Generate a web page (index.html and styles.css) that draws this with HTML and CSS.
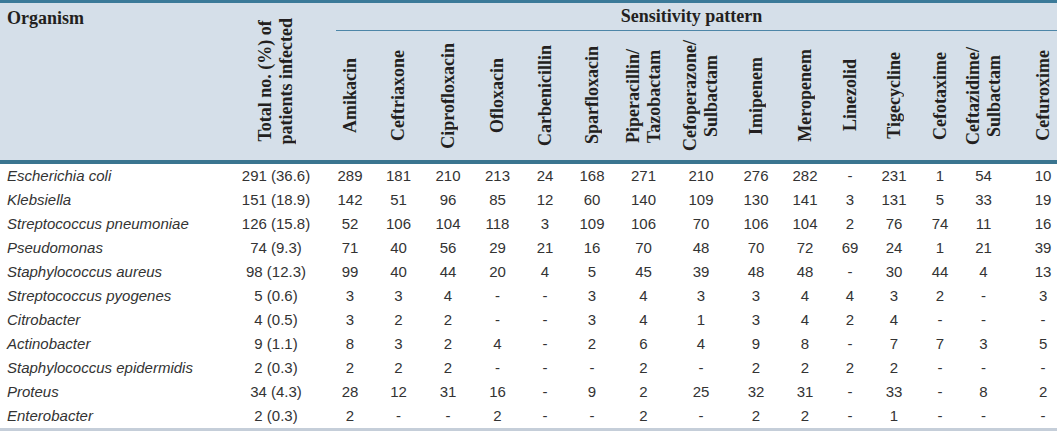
FILE: index.html
```html
<!DOCTYPE html>
<html>
<head>
<meta charset="utf-8">
<link rel="stylesheet" href="styles.css">
</head>
<body>
<table class="sens">
  <colgroup>
    <col class="c-org"><col class="c-tot">
    <col style="width:48px"><col style="width:49px"><col style="width:50px"><col style="width:49px">
    <col style="width:46px"><col style="width:48px"><col style="width:55px"><col style="width:60px">
    <col style="width:50px"><col style="width:48px"><col style="width:42px"><col style="width:46px">
    <col style="width:46px"><col style="width:41px"><col style="width:53px">
  </colgroup>
  <thead>
    <tr class="hr1">
      <th rowspan="2" class="h-org">Organism</th>
      <th rowspan="2" class="h-rot h-tot"><div class="rot-wrap tall"><span class="rot">Total no. (%) of<br>patients infected</span></div></th>
      <th colspan="15" class="h-group"><div class="group-label">Sensitivity pattern</div></th>
    </tr>
    <tr class="hr2">
      <th class="h-rot"><div class="rot-wrap"><span class="rot">Amikacin</span></div></th>
      <th class="h-rot"><div class="rot-wrap"><span class="rot">Ceftriaxone</span></div></th>
      <th class="h-rot"><div class="rot-wrap"><span class="rot">Ciprofloxacin</span></div></th>
      <th class="h-rot"><div class="rot-wrap"><span class="rot">Ofloxacin</span></div></th>
      <th class="h-rot"><div class="rot-wrap"><span class="rot">Carbenicillin</span></div></th>
      <th class="h-rot"><div class="rot-wrap"><span class="rot">Sparfloxacin</span></div></th>
      <th class="h-rot"><div class="rot-wrap"><span class="rot">Piperacillin/<br>Tazobactam</span></div></th>
      <th class="h-rot"><div class="rot-wrap"><span class="rot">Cefoperazone/<br>Sulbactam</span></div></th>
      <th class="h-rot"><div class="rot-wrap"><span class="rot">Imipenem</span></div></th>
      <th class="h-rot"><div class="rot-wrap"><span class="rot">Meropenem</span></div></th>
      <th class="h-rot"><div class="rot-wrap"><span class="rot">Linezolid</span></div></th>
      <th class="h-rot"><div class="rot-wrap"><span class="rot">Tigecycline</span></div></th>
      <th class="h-rot"><div class="rot-wrap"><span class="rot">Cefotaxime</span></div></th>
      <th class="h-rot"><div class="rot-wrap"><span class="rot">Ceftazidime/<br>Sulbactam</span></div></th>
      <th class="h-rot last"><div class="rot-wrap"><span class="rot">Cefuroxime</span></div></th>
    </tr>
  </thead>
  <tbody>
    <tr><td class="org">Escherichia coli</td><td>291 (36.6)</td><td>289</td><td>181</td><td>210</td><td>213</td><td>24</td><td>168</td><td>271</td><td>210</td><td>276</td><td>282</td><td>-</td><td>231</td><td>1</td><td>54</td><td class="last">10</td></tr>
    <tr><td class="org">Klebsiella</td><td>151 (18.9)</td><td>142</td><td>51</td><td>96</td><td>85</td><td>12</td><td>60</td><td>140</td><td>109</td><td>130</td><td>141</td><td>3</td><td>131</td><td>5</td><td>33</td><td class="last">19</td></tr>
    <tr><td class="org">Streptococcus pneumoniae</td><td>126 (15.8)</td><td>52</td><td>106</td><td>104</td><td>118</td><td>3</td><td>109</td><td>106</td><td>70</td><td>106</td><td>104</td><td>2</td><td>76</td><td>74</td><td>11</td><td class="last">16</td></tr>
    <tr><td class="org">Pseudomonas</td><td>74 (9.3)</td><td>71</td><td>40</td><td>56</td><td>29</td><td>21</td><td>16</td><td>70</td><td>48</td><td>70</td><td>72</td><td>69</td><td>24</td><td>1</td><td>21</td><td class="last">39</td></tr>
    <tr><td class="org">Staphylococcus aureus</td><td>98 (12.3)</td><td>99</td><td>40</td><td>44</td><td>20</td><td>4</td><td>5</td><td>45</td><td>39</td><td>48</td><td>48</td><td>-</td><td>30</td><td>44</td><td>4</td><td class="last">13</td></tr>
    <tr><td class="org">Streptococcus pyogenes</td><td>5 (0.6)</td><td>3</td><td>3</td><td>4</td><td>-</td><td>-</td><td>3</td><td>4</td><td>3</td><td>3</td><td>4</td><td>4</td><td>3</td><td>2</td><td>-</td><td class="last">3</td></tr>
    <tr><td class="org">Citrobacter</td><td>4 (0.5)</td><td>3</td><td>2</td><td>2</td><td>-</td><td>-</td><td>3</td><td>4</td><td>1</td><td>3</td><td>4</td><td>2</td><td>4</td><td>-</td><td>-</td><td class="last">-</td></tr>
    <tr><td class="org">Actinobacter</td><td>9 (1.1)</td><td>8</td><td>3</td><td>2</td><td>4</td><td>-</td><td>2</td><td>6</td><td>4</td><td>9</td><td>8</td><td>-</td><td>7</td><td>7</td><td>3</td><td class="last">5</td></tr>
    <tr><td class="org">Staphylococcus epidermidis</td><td>2 (0.3)</td><td>2</td><td>2</td><td>2</td><td>-</td><td>-</td><td>-</td><td>2</td><td>-</td><td>2</td><td>2</td><td>2</td><td>2</td><td>-</td><td>-</td><td class="last">-</td></tr>
    <tr><td class="org">Proteus</td><td>34 (4.3)</td><td>28</td><td>12</td><td>31</td><td>16</td><td>-</td><td>9</td><td>2</td><td>25</td><td>32</td><td>31</td><td>-</td><td>33</td><td>-</td><td>8</td><td class="last">2</td></tr>
    <tr><td class="org">Enterobacter</td><td>2 (0.3)</td><td>2</td><td>-</td><td>-</td><td>2</td><td>-</td><td>-</td><td>2</td><td>-</td><td>2</td><td>2</td><td>-</td><td>1</td><td>-</td><td>-</td><td class="last">-</td></tr>
  </tbody>
</table>
</body>
</html>
```
FILE: styles.css
```css
html, body {
  margin: 0;
  padding: 0;
  background: #ffffff;
}

.sens {
  width: 1057px;
  table-layout: fixed;
  border-collapse: separate;
  border-spacing: 0;
  border-top: 3px solid #3b7a99;
  border-bottom: 4px solid #c5ced9;
}

.c-org { width: 226px; }
.c-tot { width: 100px; }

.sens thead th {
  background: #d5dfe9;
  color: #231f20;
  font-family: "Liberation Serif", "Times New Roman", serif;
  font-weight: bold;
  font-size: 18px;
  padding: 0;
  border-bottom: 4px solid #3a7590;
}

.sens thead th.h-group {
  border-bottom: 0;
  vertical-align: top;
  height: 28px;
}

.h-org {
  text-align: left;
  vertical-align: top;
  line-height: 21px;
}

.sens thead th.h-org {
  padding: 5px 0 0 7px;
}

.rot-wrap {
  height: 129px;
  display: flex;
  align-items: center;
  justify-content: center;
}

.rot-wrap.tall {
  height: 157px;
}

.rot {
  writing-mode: vertical-rl;
  transform: rotate(180deg);
  text-align: center;
  line-height: 21px;
  white-space: nowrap;
}

.group-label {
  margin-left: 10px;
  height: 27px;
  line-height: 27px;
  text-align: center;
  text-indent: -10px;
  border-bottom: 1px solid #4d86a8;
}

.sens tbody td {
  height: 24px;
  padding: 0;
  line-height: 24px;
  text-align: center;
  font-family: "Liberation Sans", Arial, sans-serif;
  font-size: 15px;
  color: #333333;
  white-space: nowrap;
}

.sens tbody td.org {
  text-align: left;
  font-style: italic;
  padding-left: 7px;
}

.sens .last {
  padding-left: 25px;
}

.sens thead th.last {
  padding-left: 25px;
}
```
